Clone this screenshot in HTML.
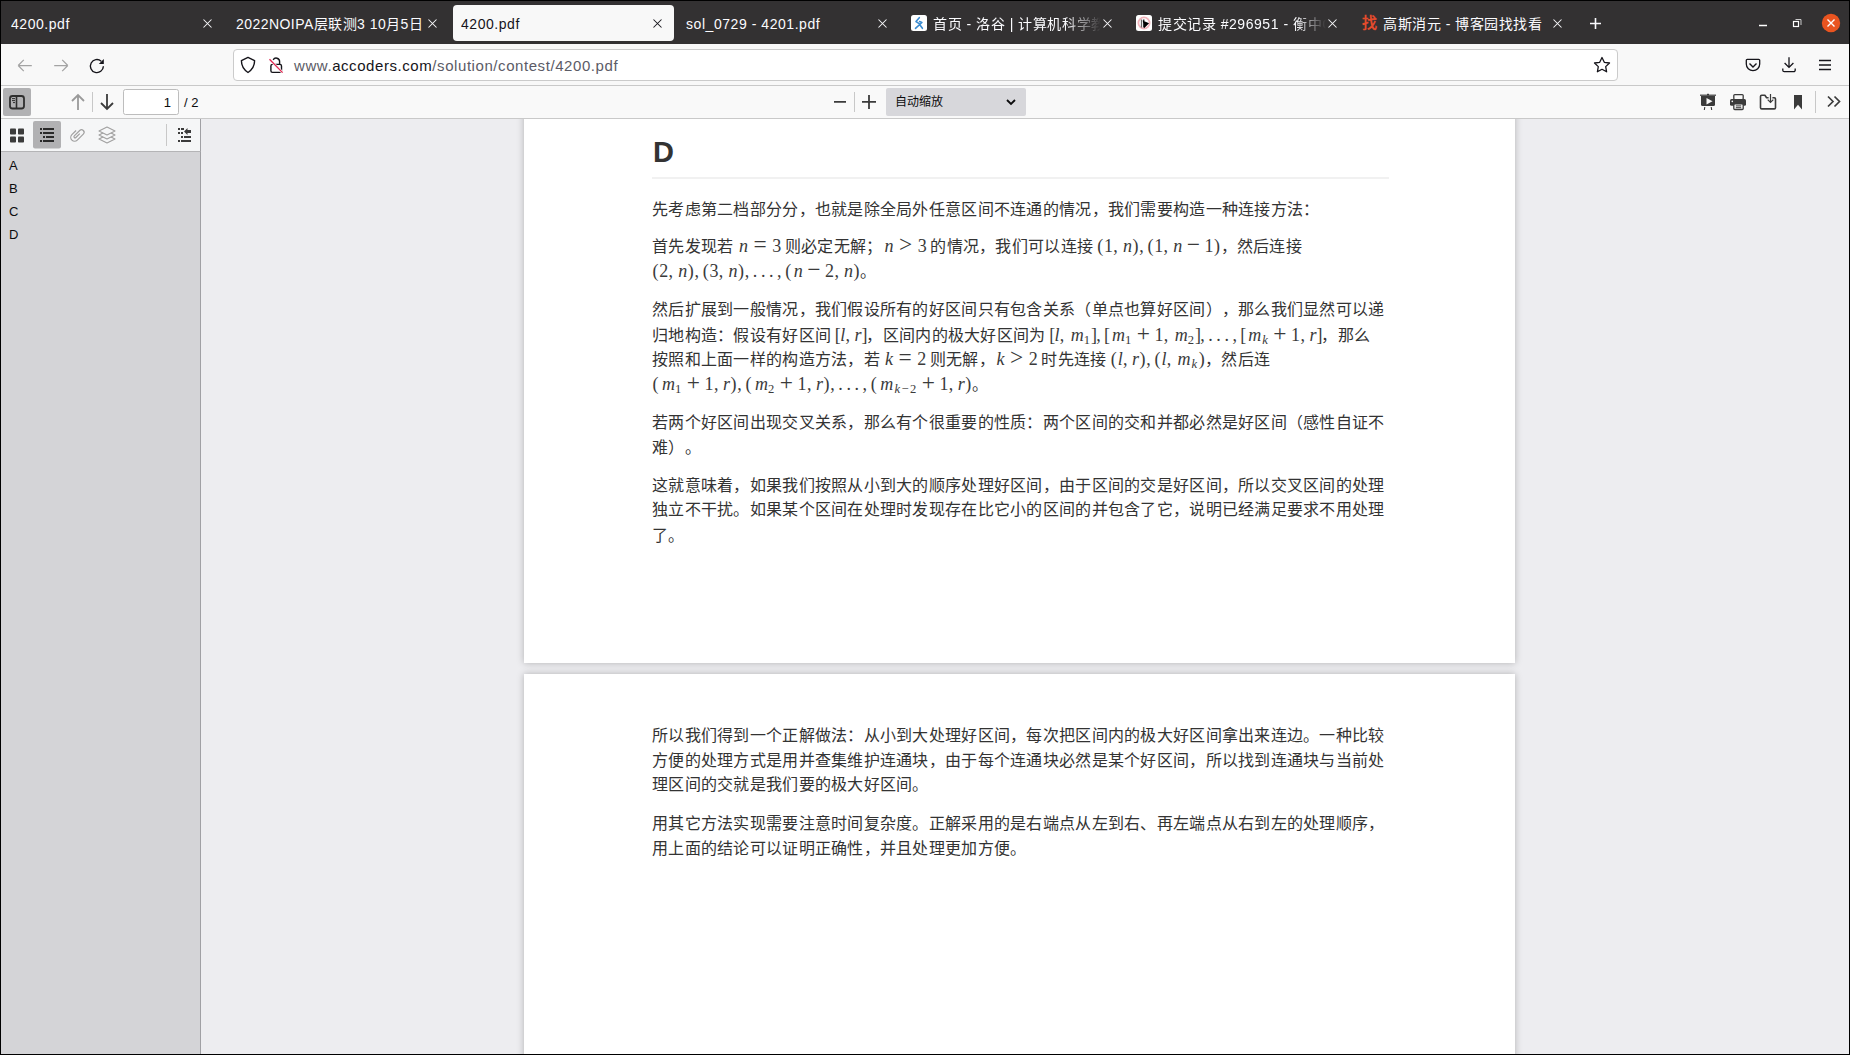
<!DOCTYPE html>
<html lang="zh-CN"><head><meta charset="utf-8">
<style>
*{box-sizing:border-box;margin:0;padding:0}
html,body{width:1850px;height:1055px;overflow:hidden;background:#000}
body{position:relative;font-family:"Liberation Sans",sans-serif}
.a{position:absolute}
svg{position:absolute;overflow:visible}
#tabbar{left:1px;top:1px;width:1848px;height:43px;background:#333132}
.tt{position:absolute;top:15px;color:#fbfbfe;font-size:14px;letter-spacing:.55px;line-height:18px;white-space:nowrap;overflow:hidden}
#nav{left:1px;top:44px;width:1848px;height:42px;background:#f8f8f8;border-bottom:1px solid #c9c9c9}
#url{left:233px;top:49px;width:1385px;height:32px;background:#fff;border:1px solid #cbcbcb;border-radius:4px}
#tb{left:1px;top:86px;width:1848px;height:33px;background:#f9f9f9;border-bottom:1px solid #c9c9c9}
#sbt{left:1px;top:119px;width:200px;height:33px;background:#f5f6f7;border-bottom:1px solid #b4b4b6;border-right:1px solid #a0a0a4}
#sbc{left:1px;top:152px;width:200px;height:902px;background:#d4d4d7;border-right:1px solid #a0a0a4}
#view{left:201px;top:119px;width:1648px;height:935px;background:#ededf0;overflow:hidden}
.page{position:absolute;background:#fff;box-shadow:0 0 7px 0 rgba(0,0,0,.26)}
.ol{position:absolute;left:9px;font-size:13px;color:#0c0c0d;line-height:16px}
.p{position:absolute;left:128px;font-size:16px;color:#333;white-space:nowrap;line-height:25px;text-spacing-trim:space-all}
.c{letter-spacing:0.28px}
.sp{display:inline-block;width:3.6px}
.m{font-family:"Liberation Serif",serif;font-size:18px;line-height:0;white-space:nowrap;color:#3a3a3a}
.g{display:inline-block;text-align:center;font-weight:normal;line-height:0}
i.g{font-style:italic;text-align:right}
.sb{display:inline-block;font-size:12.6px;vertical-align:-3px;line-height:0;text-align:left}
.h{position:absolute;left:129px;font-size:29px;font-weight:bold;color:#333;line-height:32px}
.hr{position:absolute;left:128px;width:737px;height:2px;background:#f1f1f1}
</style></head>
<body>
<div id="tabbar" class="a"></div>
<!-- active tab -->
<div class="a" style="left:453px;top:5px;width:221px;height:36px;background:#f8f8f8;border-radius:4px"></div>
<div class="tt" style="left:11px;width:180px">4200.pdf</div>
<div class="tt" style="left:236px;width:190px;letter-spacing:.45px">2022NOIPA层联测3 10月5日</div>
<div class="tt" style="left:461px;width:180px;color:#15141a">4200.pdf</div>
<div class="tt" style="left:686px;width:180px">sol_0729 - 4201.pdf</div>
<svg style="left:911px;top:15px" width="16" height="16"><rect width="16" height="16" rx="2.5" fill="#fff"/><path d="M8.3 2.7L5 6.6 8.2 8.7M8.6 6.5l2.3 1-6.4 5.8M8.8 9.8l2.6 3.5" fill="none" stroke="#3a8bd0" stroke-width="1.6" stroke-linecap="round" stroke-linejoin="round"/></svg>
<div class="tt" style="left:933px;width:170px;-webkit-mask-image:linear-gradient(to right,#000 132px,transparent 168px)">首页 - 洛谷 | 计算机科学教育新生态</div>
<svg style="left:1136px;top:15px" width="16" height="16"><rect width="16" height="16" rx="2.5" fill="#fff"/><circle cx="8" cy="8" r="5.6" fill="none" stroke="#f2b3bb" stroke-width="1.8"/><path d="M5.5 4.5v8" stroke="#666" stroke-width="1.3"/><path d="M7.8 4.5v8M7.5 6.5l4.5 2-3.5 3.5z" stroke="#000" stroke-width="1.2" fill="#000"/></svg>
<div class="tt" style="left:1158px;width:170px;-webkit-mask-image:linear-gradient(to right,#000 138px,transparent 168px)">提交记录 #296951 - 衡中OJ</div>
<div class="a" style="left:1362px;top:13px;font-size:15px;color:#e44b2c;font-weight:bold;line-height:20px">找</div>
<div class="tt" style="left:1383px;width:170px">高斯消元 - 博客园找找看</div>
<!-- close x's -->
<svg style="left:0;top:0" width="1850" height="44">
 <g stroke="#fbfbfe" stroke-width="1.05">
  <path d="M203.5 19.5l8 8M211.5 19.5l-8 8"/>
  <path d="M428.5 19.5l8 8M436.5 19.5l-8 8"/>
  <path d="M653.5 19.5l8 8M661.5 19.5l-8 8" stroke="#15141a"/>
  <path d="M878.5 19.5l8 8M886.5 19.5l-8 8"/>
  <path d="M1103.5 19.5l8 8M1111.5 19.5l-8 8"/>
  <path d="M1328.5 19.5l8 8M1336.5 19.5l-8 8"/>
  <path d="M1553.5 19.5l8 8M1561.5 19.5l-8 8"/>
 </g>
 <path d="M1590 23.5h11M1595.5 18v11" stroke="#fbfbfe" stroke-width="1.6"/>
 <path d="M1759 25.5h8" stroke="#fff" stroke-width="1.5"/>
 <rect x="1793.5" y="21.5" width="5" height="5" fill="none" stroke="#fff" stroke-width="1.2"/>
 <path d="M1795.5 19.5h5.5v5.5" fill="none" stroke="#ccc" stroke-width="1"/>
 <circle cx="1831" cy="23" r="9.2" fill="#e95420"/>
 <path d="M1827.5 19.5l7 7M1834.5 19.5l-7 7" stroke="#fff" stroke-width="1.4"/>
</svg>
<div id="nav" class="a"></div>
<div id="url" class="a"></div>
<div class="a" style="left:294px;top:57px;font-size:15px;letter-spacing:.57px;line-height:18px;color:#5b5b66;white-space:nowrap">www.<span style="color:#15141a">accoders.com</span>/solution/contest/4200.pdf</div>
<svg style="left:0;top:44px" width="1850" height="42">
 <g fill="none" stroke="#a3a3a3" stroke-width="1.25">
  <path d="M18.2 21.5h13.6M18.2 21.5l5.6-5.6M18.2 21.5l5.6 5.6"/>
  <path d="M54.2 21.5h13.6M67.8 21.5l-5.6-5.6M67.8 21.5l-5.6 5.6"/>
 </g>
 <path d="M103.4 22.3A6.5 6.5 0 1 1 101.2 17.2" fill="none" stroke="#15141a" stroke-width="1.4"/>
 <path d="M103.8 15v5.1h-5z" fill="#15141a"/>
 <path d="M248 13.4L254.6 16.6C254.6 22.2 252.5 25.6 248 28.5 243.5 25.6 241.4 22.2 241.4 16.6Z" fill="none" stroke="#15141a" stroke-width="1.4" stroke-linejoin="round"/>
 <rect x="270.9" y="20.4" width="10.6" height="8" rx="1.6" fill="none" stroke="#15141a" stroke-width="1.4"/>
 <path d="M273.2 15.9A3.4 3.4 0 0 1 279.6 17.5V20.4" fill="none" stroke="#15141a" stroke-width="1.4"/>
 <path d="M269.5 15.3l13.1 13.3" stroke="#f9f9fb" stroke-width="2.6"/>
 <path d="M269.5 15.3l13.1 13.3" stroke="#e22850" stroke-width="1.3"/>
 <path d="M1602 13.5l2.3 4.8 5.2.7-3.8 3.6.9 5.2-4.6-2.5-4.6 2.5.9-5.2-3.8-3.6 5.2-.7z" fill="none" stroke="#15141a" stroke-width="1.3" stroke-linejoin="round"/>
 <path d="M1747.3 15.3h11.4a1 1 0 0 1 1 1v3.7a6.7 6.7 0 0 1-13.4 0v-3.7a1 1 0 0 1 1-1z" fill="none" stroke="#15141a" stroke-width="1.3"/>
 <path d="M1749.5 19.5l3.5 3.5 3.5-3.5" fill="none" stroke="#15141a" stroke-width="1.4"/>
 <path d="M1789 13.2v10.2M1784.6 19l4.4 4.4 4.4-4.4M1782.8 24.4v1.8a1.5 1.5 0 0 0 1.5 1.5h9.4a1.5 1.5 0 0 0 1.5-1.5v-1.8" fill="none" stroke="#15141a" stroke-width="1.3"/>
 <path d="M1819 16.5h12M1819 21h12M1819 25.5h12" stroke="#15141a" stroke-width="1.4"/>
</svg>
<div id="tb" class="a"></div>
<svg style="left:0;top:86px" width="1850" height="33">
 <rect x="3" y="2" width="28" height="28" rx="2" fill="#b1b1b3"/>
 <rect x="10" y="10" width="14" height="12.5" rx="2.5" fill="none" stroke="#2e2e2e" stroke-width="1.8"/>
 <path d="M16.5 10v12.5" stroke="#2e2e2e" stroke-width="1.6"/>
 <path d="M12 12.6h3M12 14.6h3M13 16.6h2" stroke="#2e2e2e" stroke-width="1"/>
 <path d="M78 24V9M72 15l6-6 6 6" fill="none" stroke="#9a9a9a" stroke-width="1.8"/>
 <path d="M92.5 6v20" stroke="#c8c8c8" stroke-width="1"/>
 <path d="M107 8v15M101 17l6 6 6-6" fill="none" stroke="#3b3b3b" stroke-width="1.8"/>
 <rect x="123.5" y="3.5" width="55" height="25" rx="2" fill="#fff" stroke="#bdbdbd"/>
 <path d="M834 15.8h12M862 15.8h14M869 9v14" stroke="#3b3b3b" stroke-width="1.8"/>
 <path d="M854.5 6v20" stroke="#c8c8c8" stroke-width="1"/>
 <rect x="886" y="2" width="140" height="28" rx="2" fill="#d7d7db"/>
 <path d="M1007 14l4 4 4-4" fill="none" stroke="#0c0c0d" stroke-width="1.8"/>
 <g fill="#3b3b3b">
  <rect x="1700" y="8.6" width="16" height="1.2"/>
  <rect x="1707" y="7.8" width="2" height="1.5"/>
  <path d="M1701 10h14v8.5a1.5 1.5 0 0 1-1.5 1.5h-11a1.5 1.5 0 0 1-1.5-1.5z"/>
  <path d="M1704.8 21l-.5 3M1711.2 21l.5 3" stroke="#3b3b3b" stroke-width="1.1"/>
  <path d="M1706.5 12l6 3.3-6 3.3z" fill="#f9f9f9"/>
  <rect x="1733.8" y="8.6" width="9.4" height="5" rx="1" fill="none" stroke="#3b3b3b" stroke-width="1.3"/>
  <rect x="1730" y="13" width="16" height="6.8" rx="1.5"/>
  <circle cx="1732.3" cy="15.4" r=".8" fill="#f9f9f9"/>
  <rect x="1733.8" y="17.9" width="9.4" height="5.6" rx="1" fill="#f9f9f9" stroke="#3b3b3b" stroke-width="1.3"/>
  <path d="M1735.8 19.9h5.4M1735.8 21.7h5.4" stroke="#3b3b3b" stroke-width="1"/>
  <path d="M1768.6 11.8H1766.6L1764.9 9.3H1761.7a1.2 1.2 0 0 0-1.2 1.2V21.7a1.2 1.2 0 0 0 1.2 1.2H1774.3a1.2 1.2 0 0 0 1.2-1.2V13a1.2 1.2 0 0 0-1.2-1.2H1772.4" fill="none" stroke="#3b3b3b" stroke-width="1.6" stroke-linejoin="round"/>
  <path d="M1770.5 8v8.3M1767.7 13.6l2.8 2.8 2.8-2.8" fill="none" stroke="#3b3b3b" stroke-width="1.2"/>
  <path d="M1794 9h8v14.5l-4-4.8-4 4.8z"/>
  <path d="M1828 10.5l5 5-5 5M1834.5 10.5l5 5-5 5" fill="none" stroke="#3b3b3b" stroke-width="1.7"/>
 </g>
 <path d="M1815.5 5v22" stroke="#c8c8c8" stroke-width="1"/>
</svg>
<div class="a" style="left:123px;top:94.5px;width:48px;text-align:right;font-size:13px;line-height:16px;color:#0c0c0d">1</div>
<div class="a" style="left:184px;top:94.5px;font-size:13px;line-height:16px;color:#0c0c0d">/ 2</div>
<div class="a" style="left:895px;top:94px;font-size:12px;line-height:16px;color:#0c0c0d">自动缩放</div>
<div id="sbt" class="a"></div>
<svg style="left:0;top:119px" width="201" height="33">
 <g fill="#3b3b3b"><rect x="10" y="9.5" width="6" height="6" rx=".8"/><rect x="18" y="9.5" width="6" height="6" rx=".8"/><rect x="10" y="17.5" width="6" height="6" rx=".8"/><rect x="18" y="17.5" width="6" height="6" rx=".8"/></g>
 <rect x="33" y="2" width="28" height="27.5" rx="2" fill="#b1b1b3"/>
 <g fill="#2a2a2a"><rect x="40" y="9" width="2" height="2"/><rect x="43" y="9" width="11" height="2"/><rect x="40" y="13" width="2" height="2"/><rect x="43" y="13" width="11" height="2"/><rect x="43" y="17" width="2" height="2"/><rect x="46" y="17" width="8" height="2"/><rect x="40" y="21" width="2" height="2"/><rect x="43" y="21" width="11" height="2"/></g>
 <path d="M-4.5 -3V4A4.5 4.5 0 0 0 4.5 4V-6A3 3 0 0 0-1.5-6V3A1.3 1.3 0 0 0 1.1 3V-3.5" fill="none" stroke="#a0a0a0" stroke-width="1.4" transform="translate(77,16) rotate(45) scale(0.85)"/>
 <g fill="#f5f6f7" stroke="#a0a0a0" stroke-width="1.1" stroke-linejoin="round"><path d="M107 16l8 4-8 4-8-4z"/><path d="M107 12l8 4-8 4-8-4z"/><path d="M107 8l8 4-8 4-8-4z"/></g>
 <path d="M166.5 5v22" stroke="#c8c8c8" stroke-width="1"/>
 <g fill="#3b3b3b"><rect x="178" y="9" width="2" height="2"/><rect x="181" y="9" width="3" height="2"/><rect x="178" y="13" width="2" height="2"/><rect x="181" y="13" width="2" height="2"/><rect x="181" y="17" width="2" height="2"/><rect x="184" y="17" width="7" height="2"/><rect x="178" y="21" width="2" height="2"/><rect x="181" y="21" width="10" height="2"/>
 <path d="M184 12.5l3.5-3.5v2h3.5v3h-3.5v2z"/></g>
</svg>
<div id="sbc" class="a"></div>
<div class="ol" style="top:158px">A</div>
<div class="ol" style="top:181px">B</div>
<div class="ol" style="top:204px">C</div>
<div class="ol" style="top:227px">D</div>
<div id="view" class="a">
 <div class="page" style="left:323px;top:-59px;width:991px;height:603px">
  <div class="h" style="top:76.3px">D</div>
  <div class="hr" style="top:117px"></div>
  <div class="p" style="top:136.7px"><span class="c">先考虑第二档部分分，也就是除全局外任意区间不连通的情况，我们需要构造一种连接方法：</span></div>
  <div class="p" style="top:174.1px"><span class="c">首先发现若<b class="sp"></b></span><span class="m"><i class="g" style="width:10.92px">n</i><b class="g" style="width:5.06px"></b><b class="g" style="width:14.16px;font-size:1.3em">=</b><b class="g" style="width:5.06px"></b><b class="g" style="width:9.10px">3</b></span><span class="c"><b class="sp"></b>则必定无解；</span><span class="m"><i class="g" style="width:10.92px">n</i><b class="g" style="width:5.06px"></b><b class="g" style="width:14.16px;font-size:1.3em">></b><b class="g" style="width:5.06px"></b><b class="g" style="width:9.10px">3</b></span><span class="c"><b class="sp"></b>的情况，我们可以连接<b class="sp"></b></span><span class="m"><b class="g" style="width:7.08px">(</b><b class="g" style="width:9.10px">1</b><b class="g" style="width:5.06px">,</b><b class="g" style="width:3.03px"></b><i class="g" style="width:10.92px">n</i><b class="g" style="width:7.08px">)</b><b class="g" style="width:5.06px">,</b><b class="g" style="width:3.03px"></b><b class="g" style="width:7.08px">(</b><b class="g" style="width:9.10px">1</b><b class="g" style="width:5.06px">,</b><b class="g" style="width:3.03px"></b><i class="g" style="width:10.92px">n</i><b class="g" style="width:4.04px"></b><b class="g" style="width:14.16px;font-size:1.3em">−</b><b class="g" style="width:4.04px"></b><b class="g" style="width:9.10px">1</b><b class="g" style="width:7.08px">)</b></span><span class="c">，然后连接</span></div>
  <div class="p" style="top:199.1px"><span class="m"><b class="g" style="width:7.08px">(</b><b class="g" style="width:9.10px">2</b><b class="g" style="width:5.06px">,</b><b class="g" style="width:3.03px"></b><i class="g" style="width:10.92px">n</i><b class="g" style="width:7.08px">)</b><b class="g" style="width:5.06px">,</b><b class="g" style="width:3.03px"></b><b class="g" style="width:7.08px">(</b><b class="g" style="width:9.10px">3</b><b class="g" style="width:5.06px">,</b><b class="g" style="width:3.03px"></b><i class="g" style="width:10.92px">n</i><b class="g" style="width:7.08px">)</b><b class="g" style="width:5.06px">,</b><b class="g" style="width:3.03px"></b><b class="g" style="width:5.06px">.</b><b class="g" style="width:3.03px"></b><b class="g" style="width:5.06px">.</b><b class="g" style="width:3.03px"></b><b class="g" style="width:5.06px">.</b><b class="g" style="width:3.03px"></b><b class="g" style="width:5.06px">,</b><b class="g" style="width:3.03px"></b><b class="g" style="width:7.08px">(</b><i class="g" style="width:10.92px">n</i><b class="g" style="width:4.04px"></b><b class="g" style="width:14.16px;font-size:1.3em">−</b><b class="g" style="width:4.04px"></b><b class="g" style="width:9.10px">2</b><b class="g" style="width:5.06px">,</b><b class="g" style="width:3.03px"></b><i class="g" style="width:10.92px">n</i><b class="g" style="width:7.08px">)</b></span><span class="c">。</span></div>
  <div class="p" style="top:237.2px"><span class="c">然后扩展到一般情况，我们假设所有的好区间只有包含关系（单点也算好区间），那么我们显然可以递</span></div>
  <div class="p" style="top:262.8px"><span class="c">归地构造：假设有好区间<b class="sp"></b></span><span class="m"><b class="g" style="width:5.06px">[</b><i class="g" style="width:5.42px">l</i><b class="g" style="width:5.06px">,</b><b class="g" style="width:3.03px"></b><i class="g" style="width:8.21px">r</i><b class="g" style="width:5.06px">]</b></span><span class="c">，区间内的极大好区间为<b class="sp"></b></span><span class="m"><b class="g" style="width:5.06px">[</b><i class="g" style="width:5.42px">l</i><b class="g" style="width:5.06px">,</b><b class="g" style="width:3.03px"></b><i class="g" style="width:15.98px">m</i><span class="sb" style="width:7.28px"><b class="g" style="width:6.37px">1</b></span><b class="g" style="width:5.06px">]</b><b class="g" style="width:5.06px">,</b><b class="g" style="width:3.03px"></b><b class="g" style="width:5.06px">[</b><i class="g" style="width:15.98px">m</i><span class="sb" style="width:7.28px"><b class="g" style="width:6.37px">1</b></span><b class="g" style="width:4.04px"></b><b class="g" style="width:14.16px;font-size:1.3em">+</b><b class="g" style="width:4.04px"></b><b class="g" style="width:9.10px">1</b><b class="g" style="width:5.06px">,</b><b class="g" style="width:3.03px"></b><i class="g" style="width:15.98px">m</i><span class="sb" style="width:7.28px"><b class="g" style="width:6.37px">2</b></span><b class="g" style="width:5.06px">]</b><b class="g" style="width:5.06px">,</b><b class="g" style="width:3.03px"></b><b class="g" style="width:5.06px">.</b><b class="g" style="width:3.03px"></b><b class="g" style="width:5.06px">.</b><b class="g" style="width:3.03px"></b><b class="g" style="width:5.06px">.</b><b class="g" style="width:3.03px"></b><b class="g" style="width:5.06px">,</b><b class="g" style="width:3.03px"></b><b class="g" style="width:5.06px">[</b><i class="g" style="width:15.98px">m</i><span class="sb" style="width:7.55px"><i class="g" style="width:6.64px">k</i></span><b class="g" style="width:4.04px"></b><b class="g" style="width:14.16px;font-size:1.3em">+</b><b class="g" style="width:4.04px"></b><b class="g" style="width:9.10px">1</b><b class="g" style="width:5.06px">,</b><b class="g" style="width:3.03px"></b><i class="g" style="width:8.21px">r</i><b class="g" style="width:5.06px">]</b></span><span class="c">，那么</span></div>
  <div class="p" style="top:286.9px"><span class="c">按照和上面一样的构造方法，若<b class="sp"></b></span><span class="m"><i class="g" style="width:9.48px">k</i><b class="g" style="width:5.06px"></b><b class="g" style="width:14.16px;font-size:1.3em">=</b><b class="g" style="width:5.06px"></b><b class="g" style="width:9.10px">2</b></span><span class="c"><b class="sp"></b>则无解，</span><span class="m"><i class="g" style="width:9.48px">k</i><b class="g" style="width:5.06px"></b><b class="g" style="width:14.16px;font-size:1.3em">></b><b class="g" style="width:5.06px"></b><b class="g" style="width:9.10px">2</b></span><span class="c"><b class="sp"></b>时先连接<b class="sp"></b></span><span class="m"><b class="g" style="width:7.08px">(</b><i class="g" style="width:5.42px">l</i><b class="g" style="width:5.06px">,</b><b class="g" style="width:3.03px"></b><i class="g" style="width:8.21px">r</i><b class="g" style="width:7.08px">)</b><b class="g" style="width:5.06px">,</b><b class="g" style="width:3.03px"></b><b class="g" style="width:7.08px">(</b><i class="g" style="width:5.42px">l</i><b class="g" style="width:5.06px">,</b><b class="g" style="width:3.03px"></b><i class="g" style="width:15.98px">m</i><span class="sb" style="width:7.55px"><i class="g" style="width:6.64px">k</i></span><b class="g" style="width:7.08px">)</b></span><span class="c">，然后连</span></div>
  <div class="p" style="top:311.9px"><span class="m"><b class="g" style="width:7.08px">(</b><i class="g" style="width:15.98px">m</i><span class="sb" style="width:7.28px"><b class="g" style="width:6.37px">1</b></span><b class="g" style="width:4.04px"></b><b class="g" style="width:14.16px;font-size:1.3em">+</b><b class="g" style="width:4.04px"></b><b class="g" style="width:9.10px">1</b><b class="g" style="width:5.06px">,</b><b class="g" style="width:3.03px"></b><i class="g" style="width:8.21px">r</i><b class="g" style="width:7.08px">)</b><b class="g" style="width:5.06px">,</b><b class="g" style="width:3.03px"></b><b class="g" style="width:7.08px">(</b><i class="g" style="width:15.98px">m</i><span class="sb" style="width:7.28px"><b class="g" style="width:6.37px">2</b></span><b class="g" style="width:4.04px"></b><b class="g" style="width:14.16px;font-size:1.3em">+</b><b class="g" style="width:4.04px"></b><b class="g" style="width:9.10px">1</b><b class="g" style="width:5.06px">,</b><b class="g" style="width:3.03px"></b><i class="g" style="width:8.21px">r</i><b class="g" style="width:7.08px">)</b><b class="g" style="width:5.06px">,</b><b class="g" style="width:3.03px"></b><b class="g" style="width:5.06px">.</b><b class="g" style="width:3.03px"></b><b class="g" style="width:5.06px">.</b><b class="g" style="width:3.03px"></b><b class="g" style="width:5.06px">.</b><b class="g" style="width:3.03px"></b><b class="g" style="width:5.06px">,</b><b class="g" style="width:3.03px"></b><b class="g" style="width:7.08px">(</b><i class="g" style="width:15.98px">m</i><span class="sb" style="width:23.83px"><i class="g" style="width:6.64px">k</i><b class="g" style="width:9.91px">−</b><b class="g" style="width:6.37px">2</b></span><b class="g" style="width:4.04px"></b><b class="g" style="width:14.16px;font-size:1.3em">+</b><b class="g" style="width:4.04px"></b><b class="g" style="width:9.10px">1</b><b class="g" style="width:5.06px">,</b><b class="g" style="width:3.03px"></b><i class="g" style="width:8.21px">r</i><b class="g" style="width:7.08px">)</b></span><span class="c">。</span></div>
  <div class="p" style="top:350.3px"><span class="c">若两个好区间出现交叉关系，那么有个很重要的性质：两个区间的交和并都必然是好区间（感性自证不</span></div>
  <div class="p" style="top:374.9px"><span class="c">难）。</span></div>
  <div class="p" style="top:412.7px"><span class="c">这就意味着，如果我们按照从小到大的顺序处理好区间，由于区间的交是好区间，所以交叉区间的处理</span></div>
  <div class="p" style="top:437.3px"><span class="c">独立不干扰。如果某个区间在处理时发现存在比它小的区间的并包含了它，说明已经满足要求不用处理</span></div>
  <div class="p" style="top:462.5px"><span class="c">了。</span></div>
 </div>
 <div class="page" style="left:323px;top:555px;width:991px;height:600px">
  <div class="p" style="top:49.3px"><span class="c">所以我们得到一个正解做法：从小到大处理好区间，每次把区间内的极大好区间拿出来连边。一种比较</span></div>
  <div class="p" style="top:73.9px"><span class="c">方便的处理方式是用并查集维护连通块，由于每个连通块必然是某个好区间，所以找到连通块与当前处</span></div>
  <div class="p" style="top:98.4px"><span class="c">理区间的交就是我们要的极大好区间。</span></div>
  <div class="p" style="top:137.0px"><span class="c">用其它方法实现需要注意时间复杂度。正解采用的是右端点从左到右、再左端点从右到左的处理顺序，</span></div>
  <div class="p" style="top:162.2px"><span class="c">用上面的结论可以证明正确性，并且处理更加方便。</span></div>
 </div>
</div>
</body></html>
